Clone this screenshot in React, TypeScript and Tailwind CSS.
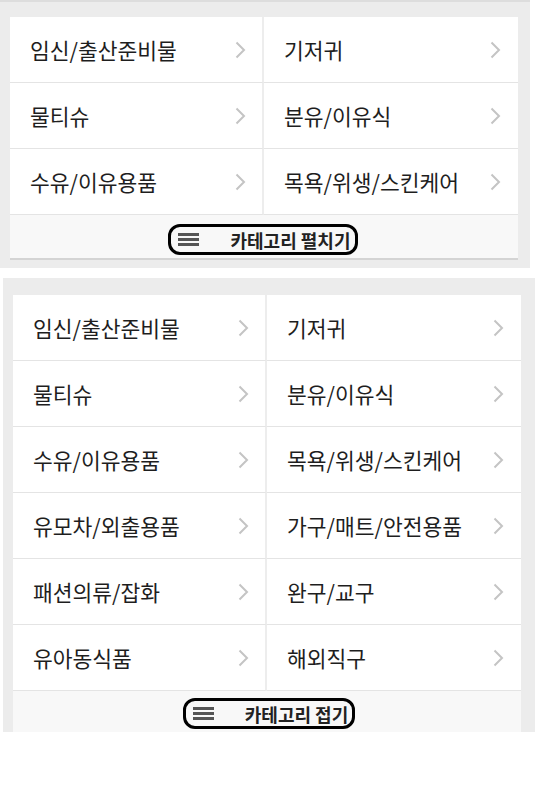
import React from 'react';

const shortList = ['임신/출산준비물', '기저귀', '물티슈', '분유/이유식', '수유/이유용품', '목욕/위생/스킨케어'];
const fullList = [
  ...shortList,
  '유모차/외출용품',
  '가구/매트/안전용품',
  '패션의류/잡화',
  '완구/교구',
  '유아동식품',
  '해외직구',
];

const font = { fontFamily: '"Noto Sans CJK KR", "Noto Sans", sans-serif' };

function Chevron() {
  return (
    <svg width="11" height="18" viewBox="0 0 11 18" fill="none">
      <path d="M1.5 1.5L9 9L1.5 16.5" stroke="#c4c4c4" strokeWidth="2" />
    </svg>
  );
}

function Hamburger() {
  return (
    <div className="flex flex-col gap-[2px] w-[21px]">
      <span className="block h-[3px] bg-[#555]" />
      <span className="block h-[3px] bg-[#555]" />
      <span className="block h-[3px] bg-[#555]" />
    </div>
  );
}

function Grid({ items }: { items: string[] }) {
  return (
    <div className="grid grid-cols-2">
      {items.map((name, i) => (
        <div
          key={name}
          className={`h-[66px] bg-white border-b border-[#e4e4e4] flex items-center justify-between pl-[20px] ${
            i % 2 === 0 ? 'border-r-2 border-r-[#ededed] pr-[16px]' : 'pr-[17px]'
          }`}
        >
          <span className="text-[21.5px] leading-none text-[#1e1e1e]">{name}</span>
          <Chevron />
        </div>
      ))}
    </div>
  );
}

function Toggle({ label }: { label: string }) {
  return (
    <div className="flex items-center h-[31px] border-[3px] border-black rounded-[12px] pl-[7px] pr-[4px] gap-[31px]">
      <Hamburger />
      <span className="text-[18px] leading-none font-bold text-[#222]">{label}</span>
    </div>
  );
}

export default function App() {
  return (
    <div className="w-[535px] h-[787px] bg-white overflow-hidden" style={font}>
      {/* collapsed panel */}
      <div className="w-[530px] bg-[#ececec] border-t-2 border-[#dddddd] pt-[15px] pl-[10px] pr-[12px] pb-[8px]">
        <Grid items={shortList} />
        <div className="h-[45px] bg-[#f8f8f8] border-b-2 border-[#d4d4d4] flex items-center justify-center pt-[6px] pr-[2px]">
          <Toggle label="카테고리 펼치기" />
        </div>
      </div>

      <div className="h-[10px]" />

      {/* expanded panel */}
      <div className="ml-[3px] w-[532px] bg-[#ececec] pt-[17px] pl-[10px] pr-[14px]">
        <Grid items={fullList} />
        <div className="h-[41px] bg-[#f8f8f8] flex items-center justify-center pl-[4px] pt-[4px]">
          <Toggle label="카테고리 접기" />
        </div>
      </div>
    </div>
  );
}
